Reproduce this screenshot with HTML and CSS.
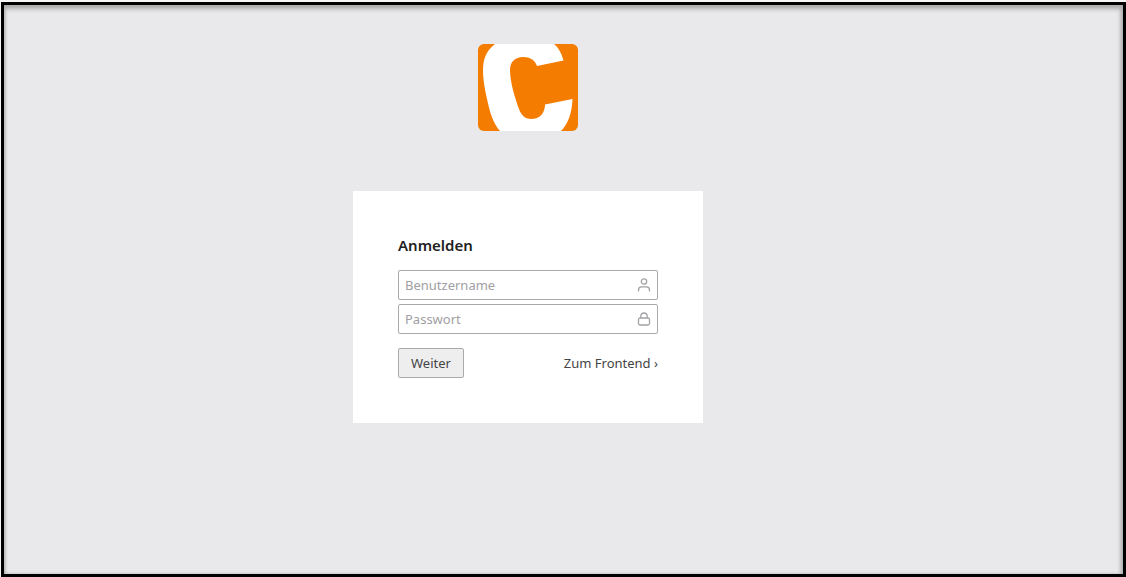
FILE: index.html
```html
<!DOCTYPE html>
<html lang="de">
  <head>
    <meta charset="UTF-8" />
    <meta name="viewport" content="width=device-width, initial-scale=1.0" />
    <title>Anmelden</title>
    <link rel="stylesheet" href="styles.css">
  </head>
  <body>
    <div class="frame">
      <main class="login">
        <svg class="logo" viewBox="0 0 100 87" role="img" aria-label="Logo">
          <rect width="100" height="87" rx="6" fill="#f47c00" />
          <path fill="#fff" d="M17 0C8 7 5 15 5 27C5 35 7 46 9 55C12 69 15 79 22 87H83C90 80 94 69 94.500 55L67 60.500C67 69 62 75 53 75C47 75 43 71 41 65C37 54 32 38 32 26C32 18 37 13 45 13C52 13 57 16 59 22L85.500 16.500C83.500 9.500 81 4 76 0Z" />
        </svg>
        <form class="card">
          <h1>Anmelden</h1>
          <div class="field">
            <input type="text" name="username" placeholder="Benutzername" aria-label="Benutzername" />
            <svg class="icon" viewBox="0 0 14 14">
              <circle cx="7" cy="3.500" r="2.700" />
              <path d="M1.500 13.500V12C1.500 10 2.700 8.800 4.400 8.800H9.600C11.300 8.800 12.500 10 12.500 12V13.500" />
            </svg>
          </div>
          <div class="field">
            <input type="password" name="password" placeholder="Passwort" aria-label="Passwort" />
            <svg class="icon" viewBox="0 0 14 14">
              <rect x="1.500" y="6" width="11" height="7" rx="1.500" />
              <path d="M3.800 6V4.200C3.800 2.300 5.100 1 7 1S10.200 2.300 10.200 4.200V6" />
            </svg>
          </div>
          <div class="actions">
            <button type="submit">Weiter</button>
            <a href="#">Zum Frontend ›</a>
          </div>
        </form>
      </main>
    </div>
  </body>
</html>
```

FILE: styles.css
```css
* {
  box-sizing: border-box;
}
body {
  margin: 0;
  padding: 2px 0 0 1px;
  min-height: 100vh;
  display: flex;
  background: #f3f5f6;
  color: #444;
  font-family: "Noto Sans", sans-serif;
  font-size: 13px;
  line-height: 20px;
}
.frame {
  flex: 1;
  border: 3px solid #000;
  background: #e9e9eb;
  box-shadow: inset 0 4px 4px #aaa, inset -3px 0 4px -1px #aaa, inset 2px 0 3px -1px #bbb;
}
.login {
  display: flex;
  flex-direction: column;
  align-items: center;
  gap: 60px;
  padding: 39px 71px 40px 0;
}
.logo {
  width: 100px;
}
.card {
  width: 100%;
  max-width: 350px;
  padding: 44px 45px 45px;
  background: #fff;
}
h1 {
  margin: 0 0 15px;
  color: #222;
  font-size: 15px;
  font-weight: 600;
  line-height: 20px;
}
.field {
  position: relative;
  margin-bottom: 4px;
}
.field input {
  display: block;
  width: 100%;
  height: 30px;
  padding: 0 30px 0 6px;
  border: 1px solid #aaa;
  border-radius: 2px;
  background: #fff;
  color: #222;
  font: inherit;
}
.field input::placeholder {
  color: #a0a0a3;
  opacity: 1;
}
.icon {
  position: absolute;
  top: 8px;
  right: 7px;
  width: 14px;
  height: 14px;
  fill: none;
  stroke: #a3a3a6;
  stroke-width: 1.3;
}
.actions {
  display: flex;
  justify-content: space-between;
  align-items: center;
  margin-top: 14px;
}
button {
  height: 30px;
  padding: 0 12px;
  border: 1px solid #aaa;
  border-radius: 2px;
  background: #eee;
  color: #444;
  font: inherit;
  cursor: pointer;
}
a {
  color: #444;
  text-decoration: none;
}
a:hover {
  color: #f47c00;
}
```
